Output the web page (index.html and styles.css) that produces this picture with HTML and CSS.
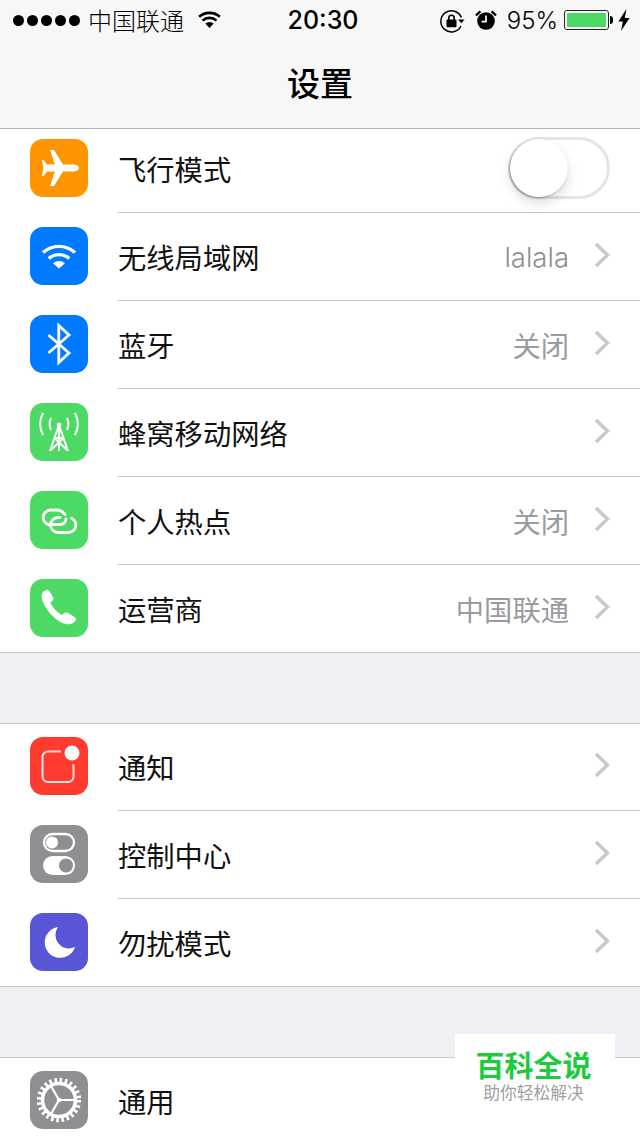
FILE: index.html
```html
<!DOCTYPE html>
<html lang="zh-CN">
<head>
<meta charset="utf-8">
<title>设置</title>
<link rel="stylesheet" href="styles.css">
</head>
<body>
<div class="screen">
  <header class="nav">
    <div class="status">
      <div class="status-left">
        <span class="signal"><i></i><i></i><i></i><i></i><i></i></span>
        <span class="carrier">中国联通</span>
        <svg class="st-wifi" width="25" height="18" viewBox="0 0 24 18"><path d="M12 17 7.800 12.600a6.200 6.200 0 0 1 8.400 0Z" fill="#000"/><path d="M5 9.600a10.400 10.400 0 0 1 14 0M1.600 5.800a15.600 15.600 0 0 1 20.800 0" fill="none" stroke="#000" stroke-width="2.600"/></svg>
      </div>
      <div class="time">20:30</div>
      <div class="status-right">
        <svg class="st-lock" width="26" height="24" viewBox="0 0 26 24"><path d="M21.400 8.600A10.600 10.600 0 1 0 21 17" fill="none" stroke="#000" stroke-width="1.500"/><path d="m18 10.600 6.600 0-3.300 3.600Z" fill="#000"/><rect x="6.500" y="10.600" width="10" height="7.600" rx="1" fill="#000"/><path d="M8.800 11V9a2.700 2.700 0 0 1 5.400 0v2" fill="none" stroke="#000" stroke-width="1.600"/></svg>
        <svg class="st-alarm" width="22" height="22" viewBox="0 0 22 22"><circle cx="11" cy="12" r="8.800" fill="#000"/><path d="M11 6.500V12.600H6.600" fill="none" stroke="#fff" stroke-width="1.700"/><path d="M1 6.400 5.400 2.400M21 6.400 16.600 2.400" stroke="#000" stroke-width="2.400" fill="none"/></svg>
        <span class="percent">95%</span>
        <span class="battery"><span class="battery-fill"></span></span>
        <span class="battery-tip"></span>
        <svg class="st-bolt" width="12" height="22" viewBox="0 0 12 22"><path d="M8.400 0 .4 12.400h4.400L3 22l8.600-13H6.800Z" fill="#000"/></svg>
      </div>
    </div>
    <h1 class="title">设置</h1>
  </header>

  <main class="content">
    <section class="group group-scrolled">
      <div class="row">
        <span class="icon icon-orange"><svg viewBox="0 0 58 58"><path d="M49 29c0-2-3-3.500-6-3.500H33L24 11h-4l5 14.500h-8L13.500 21H12l1.500 8-1.500 8h1.500l3.500-4.500h8L20 47h4l9-14.500h10c3 0 6-1.500 6-3.500Z" fill="#fff"/></svg></span>
        <div class="body">
          <span class="label">飞行模式</span>
          <span class="switch"><span class="knob"></span></span>
        </div>
      </div>
      <div class="row">
        <span class="icon icon-blue"><svg viewBox="0 0 58 58"><path d="M13 25.500a24 24 0 0 1 32 0M18.800 31.500a15.500 15.500 0 0 1 20.400 0" fill="none" stroke="#fff" stroke-width="3.400"/><path d="M29 41.500 23 36.200a9 9 0 0 1 12 0Z" fill="#fff"/></svg></span>
        <div class="body">
          <span class="label">无线局域网</span>
          <span class="value latin">lalala</span>
          <svg class="chevron" viewBox="0 0 16 26"><path d="m2 2 11.500 11L2 24" /></svg>
        </div>
      </div>
      <div class="row">
        <span class="icon icon-blue"><svg viewBox="0 0 58 58"><path d="M18.500 20 39 38 28.800 47.500v-37L39 20 18.500 38" fill="none" stroke="#fff" stroke-width="2.800"/></svg></span>
        <div class="body">
          <span class="label">蓝牙</span>
          <span class="value">关闭</span>
          <svg class="chevron" viewBox="0 0 16 26"><path d="m2 2 11.500 11L2 24" /></svg>
        </div>
      </div>
      <div class="row">
        <span class="icon icon-green"><svg viewBox="0 0 58 58"><g fill="none" stroke="#fff" stroke-width="2"><path d="M13 10a24 24 0 0 0 0 22M45 10a24 24 0 0 1 0 22M21 15a14 14 0 0 0 0 12M37 15a14 14 0 0 1 0 12"/><path d="M29 22v26M29 22 20 48M29 22 38 48M24.500 35 37 47M33.500 35 21 47M25.500 35h7"/></g><circle cx="29" cy="22" r="2.400" fill="#fff"/></svg></span>
        <div class="body">
          <span class="label">蜂窝移动网络</span>
          <svg class="chevron" viewBox="0 0 16 26"><path d="m2 2 11.500 11L2 24" /></svg>
        </div>
      </div>
      <div class="row">
        <span class="icon icon-green"><svg viewBox="0 0 58 58"><g fill="none" stroke="#fff" stroke-width="2.800" stroke-linecap="round"><path d="M35 23.500C33 20.500 30 19 26 19h-5.500a7.500 7.500 0 0 0-1.500 14.800"/><path d="M30 26.500h-2a7.500 7.500 0 0 0 0 15h10.500a7.500 7.500 0 0 0 3-14.300"/><path d="M23 33.500h7c3 0 5.500-1.500 6-5.500"/></g></svg></span>
        <div class="body">
          <span class="label">个人热点</span>
          <span class="value">关闭</span>
          <svg class="chevron" viewBox="0 0 16 26"><path d="m2 2 11.500 11L2 24" /></svg>
        </div>
      </div>
      <div class="row">
        <span class="icon icon-green"><svg viewBox="0 0 58 58"><path d="M15 12c1.500-1.500 3.500-1.500 4.500.2l3.500 6c.8 1.300.5 2.800-.7 3.800l-2 1.700c2.500 5 7 9.500 11.500 12.300l2.200-1.800c1.300-1 2.800-1 4.100-.2l6.500 4c1.600 1 1.800 3 .5 4.300-2 2-4.500 3.200-7.500 2.900-7-.8-13.500-6-18.500-12-5-6.500-8-13-7.500-17 .3-2 1.500-3.700 3.400-5Z" fill="#fff"/></svg></span>
        <div class="body">
          <span class="label">运营商</span>
          <span class="value">中国联通</span>
          <svg class="chevron" viewBox="0 0 16 26"><path d="m2 2 11.500 11L2 24" /></svg>
        </div>
      </div>
    </section>

    <section class="group">
      <div class="row">
        <span class="icon icon-red"><svg viewBox="0 0 58 58"><path d="M31 14.500H18a5.500 5.500 0 0 0-5.500 5.500v19.500a5.500 5.500 0 0 0 5.500 5.500h20a5.500 5.500 0 0 0 5.500-5.500V27" fill="none" stroke="#fff" stroke-opacity=".85" stroke-width="2"/><circle cx="42" cy="16" r="7.500" fill="#fff"/></svg></span>
        <div class="body">
          <span class="label">通知</span>
          <svg class="chevron" viewBox="0 0 16 26"><path d="m2 2 11.500 11L2 24" /></svg>
        </div>
      </div>
      <div class="row">
        <span class="icon icon-gray"><svg viewBox="0 0 58 58"><rect x="14" y="9" width="30" height="17" rx="8.500" fill="none" stroke="#fff" stroke-width="2.400"/><circle cx="22" cy="17.500" r="6" fill="#fff"/><rect x="13" y="31" width="32" height="19" rx="9.500" fill="#fff"/><circle cx="36" cy="40.500" r="7" fill="#8e8e93"/></svg></span>
        <div class="body">
          <span class="label">控制中心</span>
          <svg class="chevron" viewBox="0 0 16 26"><path d="m2 2 11.500 11L2 24" /></svg>
        </div>
      </div>
      <div class="row">
        <span class="icon icon-purple"><svg viewBox="0 0 58 58"><path d="M28 14A15.500 15.500 0 1 0 45 34 13.500 13.500 0 0 1 28 14Z" fill="#fff"/></svg></span>
        <div class="body">
          <span class="label">勿扰模式</span>
          <svg class="chevron" viewBox="0 0 16 26"><path d="m2 2 11.500 11L2 24" /></svg>
        </div>
      </div>
    </section>

    <section class="group">
      <div class="row">
        <span class="icon icon-gear"><svg viewBox="0 0 58 58"><circle cx="29" cy="29" r="20" fill="none" stroke="#fff" stroke-width="4.400" stroke-dasharray="2.600 2.636"/><circle cx="29" cy="29" r="16.500" fill="none" stroke="#fff" stroke-width="3.600"/><path d="M29 29H45M29 29 21 15M29 29 21 43" stroke="#fff" stroke-width="2.200" fill="none"/><circle cx="29" cy="29" r="2.200" fill="#fff"/></svg></span>
        <div class="body">
          <span class="label">通用</span>
        </div>
      </div>
    </section>
  </main>

  <aside class="badge">
    <div class="badge-name">百科全说</div>
    <div class="badge-slogan">助你轻松解决</div>
  </aside>
</div>
</body>
</html>
```
FILE: styles.css
```css
* { box-sizing: border-box; }

html, body {
  margin: 0;
  padding: 0;
  height: 1136px;
  overflow: hidden;
}

body {
  background: #efeff4;
  color: #000;
  font-family: "Noto Sans CJK SC", "Liberation Sans", sans-serif;
}

.screen {
  position: relative;
  width: 640px;
  height: 1136px;
  overflow: hidden;
}

/* Navigation bar with the status bar on top */
.nav {
  position: relative;
  z-index: 2;
  height: 129px;
  background: #f7f7f8;
  border-bottom: 1px solid #b2b2b2;
}

.status {
  display: grid;
  grid-template-columns: 1fr auto 1fr;
  align-items: center;
  height: 40px;
  padding: 0 10px 0 13px;
}

.status-left,
.status-right {
  display: flex;
  align-items: center;
}

.status-right { justify-content: flex-end; }

.signal {
  display: flex;
  gap: 3px;
}

.signal i {
  width: 11px;
  height: 11px;
  border-radius: 50%;
  background: #000;
}

.carrier {
  margin-left: 8px;
  font-size: 24px;
  font-weight: 300;
  line-height: 40px;
}

.st-wifi { margin-left: 13px; }

.time {
  margin-left: 3px;
  font-family: Inter, "Liberation Sans", sans-serif;
  font-size: 25px;
  font-weight: 500;
}

.st-lock { margin-top: 1px; }

.st-alarm { margin-left: 9px; margin-top: -1px; }

.percent {
  margin-left: 10px;
  font-family: Inter, "Liberation Sans", sans-serif;
  font-size: 24px;
  font-weight: 300;
}

.battery {
  display: block;
  width: 45px;
  height: 20px;
  margin-left: 6px;
  padding: 2px;
  border: 1px solid #222;
  border-radius: 3px;
}

.battery-fill {
  display: block;
  height: 100%;
  background: #4cd964;
  border-radius: 1px;
}

.battery-tip {
  width: 3px;
  height: 8px;
  margin-left: 1px;
  background: #000;
  border-radius: 0 3px 3px 0;
}

.st-bolt { margin-left: 5px; }

.title {
  margin: 0;
  height: 88px;
  padding-top: 18px;
  font-size: 33px;
  font-weight: 500;
  line-height: 48px;
  text-align: center;
}

/* Settings groups */
.content { margin-top: -4px; }

.group {
  margin-bottom: 70px;
  background: #fff;
  border-top: 1px solid #c8c7cc;
  border-bottom: 1px solid #c8c7cc;
}

.group-scrolled { border-top: 0; }

.row {
  display: flex;
  gap: 30px;
  height: 88px;
  padding-left: 30px;
}

.row:first-child { height: 87px; }
.row:last-child { height: 87px; }
.row:first-child:last-child { height: 86px; }

.group-scrolled .row:first-child { height: 88px; }

.icon {
  flex: none;
  width: 58px;
  height: 58px;
  margin-top: 14px;
  border-radius: 13px;
  overflow: hidden;
}

.row:first-child .icon { margin-top: 13px; }
.group-scrolled .row:first-child .icon { margin-top: 14px; }

.icon svg {
  display: block;
  width: 58px;
  height: 58px;
}

.icon-orange { background: #ff9500; }
.icon-blue { background: #007aff; }
.icon-green { background: #4cd964; }
.icon-red { background: #ff3b30; }
.icon-gray { background: #8e8e93; }
.icon-purple { background: #5856d6; }
.icon-gear { background: #8e8e93; }

.body {
  flex: 1;
  display: flex;
  align-items: center;
  padding: 1px 30px 0 0;
  border-bottom: 1px solid #c8c7cc;
}

.row:first-child .body { padding: 0 30px 1px 0; }
.group-scrolled .row:first-child .body { padding: 1px 30px 0 0; }

.row:last-child .body { border-bottom: 0; }

.label {
  flex: 1;
  font-size: 28.300px;
  line-height: 40px;
  color: #111;
}

.value {
  font-size: 28.300px;
  line-height: 40px;
  color: #9a9a9f;
}

.latin {
  font-family: Inter, "Liberation Sans", sans-serif;
  font-size: 27.500px;
  font-weight: 300;
  color: #8e8e93;
}

.chevron {
  flex: none;
  width: 16px;
  height: 26px;
  margin: -4px 0 0 25px;
  fill: none;
  stroke: #c7c7cc;
  stroke-width: 3.400;
}

/* Airplane mode switch, off */
.switch {
  position: relative;
  flex: none;
  width: 102px;
  height: 62px;
  margin-top: -2px;
  background: #fff;
  border: 3px solid #e5e5e5;
  border-radius: 31px;
}

.knob {
  position: absolute;
  left: -1px;
  top: -1px;
  width: 58px;
  height: 58px;
  background: #fff;
  border-radius: 50%;
  box-shadow: -1px 1px 2px rgba(0, 0, 0, .3), 0 6px 12px rgba(0, 0, 0, .14);
}

/* Site badge laid over the corner of the list */
.badge {
  position: absolute;
  left: 455px;
  top: 1034px;
  z-index: 3;
  width: 160px;
  height: 76px;
  padding: 12px 3px 0 0;
  background: #fff;
  text-align: center;
}

.badge-name {
  font-size: 29px;
  font-weight: 700;
  line-height: 36px;
  color: #1ecb3f;
}

.badge-slogan {
  font-size: 16.800px;
  line-height: 20px;
  color: #a0a0a0;
}
```
